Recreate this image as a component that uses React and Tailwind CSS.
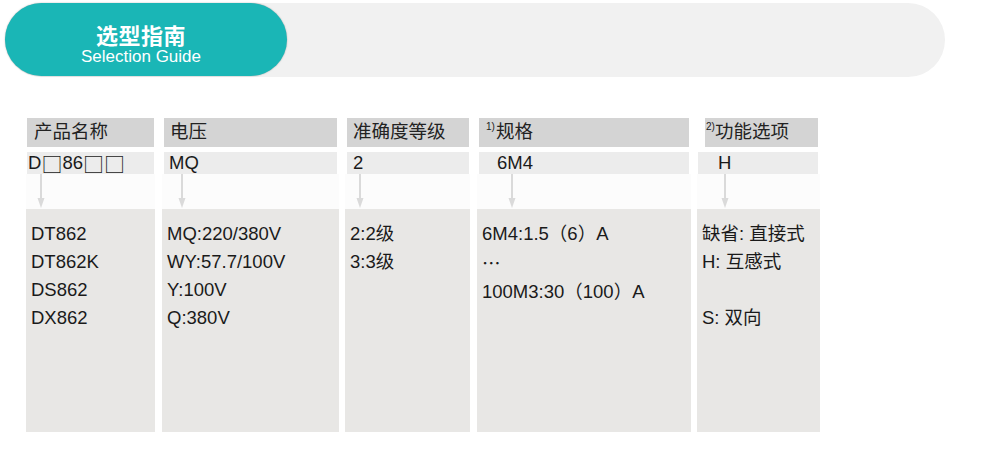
import React from "react";

const Arrow = ({ x }) => (
  <svg
    className="absolute top-0"
    style={{ left: x - 5 }}
    width="10"
    height="35"
    viewBox="0 0 10 35"
  >
    <line x1="5" y1="0" x2="5" y2="27" stroke="#dadada" strokeWidth="2" />
    <polygon points="1.5,24 8.5,24 5,34" fill="#dadada" />
  </svg>
);

const Sq = () => (
  <span className="font-['Noto_Sans_CJK_SC',sans-serif] text-[21px]">□</span>
);

const Dots = () => (
  <span className="font-['Noto_Sans_CJK_SC',sans-serif]">…</span>
);

const columns = [
  {
    w: "w-[129px]",
    ml: "",
    hdr: "mx-px pl-[7px]",
    row: "mx-px pl-px",
    arrow: 15,
    head: <>产品名称</>,
    val: (
      <>
        D<Sq />86<Sq /><Sq />
      </>
    ),
    lines: ["DT862", "DT862K", "DS862", "DX862"],
  },
  {
    w: "w-[177px]",
    ml: "ml-[7px]",
    hdr: "mx-[2px] pl-[6px]",
    row: "mx-[2px] pl-[5px]",
    arrow: 20,
    head: <>电压</>,
    val: <>MQ</>,
    lines: ["MQ:220/380V", "WY:57.7/100V", "Y:100V", "Q:380V"],
  },
  {
    w: "w-[125px]",
    ml: "ml-[6px]",
    hdr: "ml-[2px] mr-px pl-[6px]",
    row: "ml-[2px] mr-px pl-[6px]",
    arrow: 15,
    head: <>准确度等级</>,
    val: <>2</>,
    lines: ["2:2级", "3:3级"],
  },
  {
    w: "w-[214px]",
    ml: "ml-[7px]",
    hdr: "mx-[2px] pl-[7px]",
    row: "mx-[2px] pl-[18px]",
    arrow: 35,
    head: (
      <>
        <span className="text-[10px] relative top-[-6px] mr-px">1)</span>规格
      </>
    ),
    val: <>6M4</>,
    lines: ["6M4:1.5（6）A", <Dots key="d" />, "100M3:30（100）A"],
  },
  {
    w: "w-[123px]",
    ml: "ml-[6px]",
    hdr: "ml-[8px] mr-[2px] pl-px",
    row: "ml-px mr-[2px] pl-[20px]",
    arrow: 28,
    head: (
      <>
        <span className="text-[10px] relative top-[-6px]">2)</span>功能选项
      </>
    ),
    val: <>H</>,
    lines: ["缺省: 直接式", "H: 互感式", "\u00a0", "S: 双向"],
  },
];

export default function App() {
  return (
    <div className="w-[990px] h-[472px] bg-white overflow-hidden font-['Liberation_Sans','Noto_Sans_CJK_SC',sans-serif] text-[#1a1a1a]">
      <div className="pt-[3px] pl-[5px]">
        <div className="w-[940px] h-[74px] bg-[#f1f1f1] rounded-full flex">
          <div className="w-[282px] h-[73px] rounded-full bg-[#1ab6b6] shadow-[0_0_1.5px_rgba(0,0,0,0.35)] flex flex-col items-center pt-[18px] pr-[10px] text-white">
            <div className="text-[22px] font-bold leading-[26px] font-['Noto_Sans_CJK_SC',sans-serif] tracking-[0.5px]">
              选型指南
            </div>
            <div className="text-[17px] leading-[19px]">Selection Guide</div>
          </div>
        </div>
      </div>

      <div className="flex mt-[41px] pl-[26px]">
        {columns.map((c, i) => (
          <div key={i} className={`${c.w} ${c.ml} flex flex-col`}>
            <div
              className={`${c.hdr} h-[29px] bg-[#d4d4d4] flex items-center text-[18.5px] leading-none whitespace-nowrap text-[#222]`}
            >
              {c.head}
            </div>
            <div
              className={`${c.row} mt-[5px] h-[22px] bg-[#ececec] flex items-center text-[18.5px] leading-none whitespace-nowrap`}
            >
              {c.val}
            </div>
            <div className="relative h-[35px] bg-[#fcfcfc]">
              <Arrow x={c.arrow} />
            </div>
            <div className="h-[223px] bg-[#e8e7e5] pt-[11px] pl-[5px] text-[18.5px] leading-[28px] whitespace-nowrap">
              {c.lines.map((l, j) => (
                <div key={j}>{l}</div>
              ))}
            </div>
          </div>
        ))}
      </div>
    </div>
  );
}
